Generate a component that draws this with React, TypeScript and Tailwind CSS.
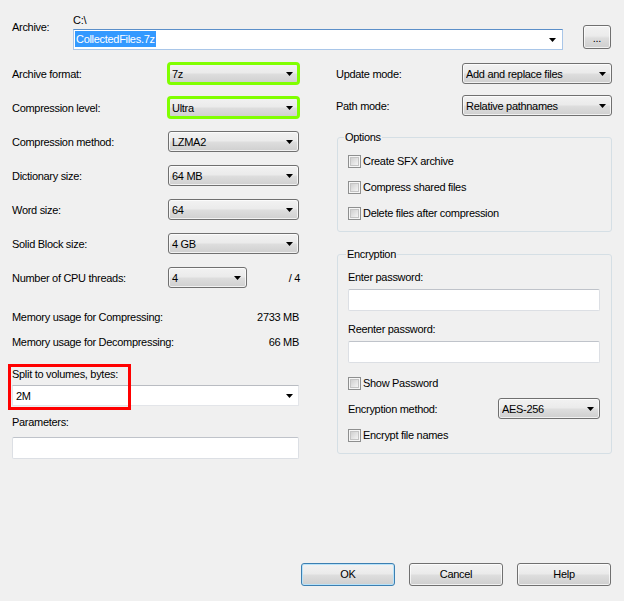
import clsx from 'clsx';

// Small black drop-down triangle used by every combo box
function Arrow() {
  return (
    <svg width="7" height="4" viewBox="0 0 7 4" className="shrink-0">
      <path d="M0 0h7L3.5 4z" fill="#000" />
    </svg>
  );
}

// Read-only combo box (grey button face)
function Combo({ value, width, green }: { value: string; width: string; green?: boolean }) {
  return (
    <div
      className={clsx(
        'flex h-[21px] shrink-0 items-center rounded-[3px] border border-[#707070] bg-[linear-gradient(#f2f2f2,#ebebeb_45%,#dddddd_55%,#cfcfcf)] pl-[3px] pr-[5px] shadow-[inset_0_0_0_1px_rgba(255,255,255,0.7)]',
        width,
        green && 'outline-[3px] outline-offset-[-2px] outline-[#80ff00] outline-solid'
      )}
    >
      <span className="flex-1 truncate leading-[14px]">{value}</span>
      <Arrow />
    </div>
  );
}

function TextBox({ width, children }: { width: string; children?: React.ReactNode }) {
  return (
    <div
      className={clsx(
        'flex h-[22px] items-center rounded-[2px] border border-[#dcdfe4] border-t-[#bfc3ca] bg-white pl-[3px] pr-[5px]',
        width
      )}
    >
      {children}
    </div>
  );
}

function CheckBox({ label }: { label: string }) {
  return (
    <div className="flex h-[14px] items-center gap-[2px]">
      <div className="h-[13px] w-[13px] shrink-0 border border-[#8e8f8f] bg-[#f6f6f6] p-[1px]">
        <div className="h-full w-full border border-[#c4c4c4] bg-[linear-gradient(135deg,#d0d0d0,#f4f4f4)]" />
      </div>
      <span className="leading-[14px]">{label}</span>
    </div>
  );
}

function Button({ label, primary }: { label: string; primary?: boolean }) {
  return (
    <div
      className={clsx(
        'flex h-[23px] w-[94px] items-center justify-center rounded-[3px] border bg-[linear-gradient(#f2f2f2,#ebebeb_45%,#dddddd_55%,#cfcfcf)]',
        primary
          ? 'border-[#3c7fb1] shadow-[inset_0_0_0_1px_#b8e2f9]'
          : 'border-[#707070] shadow-[inset_0_0_0_1px_rgba(255,255,255,0.7)]'
      )}
    >
      {label}
    </div>
  );
}

const leftRows = [
  { label: 'Archive format:', value: '7z', green: true },
  { label: 'Compression level:', value: 'Ultra', green: true },
  { label: 'Compression method:', value: 'LZMA2' },
  { label: 'Dictionary size:', value: '64 MB' },
  { label: 'Word size:', value: '64' },
  { label: 'Solid Block size:', value: '4 GB' },
];

export default function App() {
  return (
    <div className="flex h-[601px] w-[624px] flex-col bg-[#f0f0f0] font-['Liberation_Sans',Arial,sans-serif] text-[11px] tracking-[-0.3px] text-black">
      {/* Archive path */}
      <div className="flex pl-[12px] pr-[13px] pt-[12px]">
        <div className="w-[61px] shrink-0 pt-[8px] leading-[14px]">Archive:</div>
        <div className="flex flex-1 flex-col">
          <div className="pt-[1px] leading-[14px]">C:\</div>
          <div className="flex items-start">
            <div className="mt-[2px] flex h-[21px] flex-1 items-center border border-[#a9c6e8] border-t-[#5b8fc9] bg-white pl-[1px] pr-[6px]">
              <span className="flex-1">
                <span className="inline-block bg-[#3399ff] px-[1px] leading-[16px] text-white">CollectedFiles.7z</span>
              </span>
              <Arrow />
            </div>
            <div className="ml-[20px] mt-[-2px] flex h-[24px] w-[28px] items-center justify-center rounded-[3px] border border-[#707070] bg-[linear-gradient(#f2f2f2,#ebebeb_45%,#dddddd_55%,#cfcfcf)] pt-[3px] shadow-[inset_0_0_0_1px_rgba(255,255,255,0.7)]">
              ...
            </div>
          </div>
        </div>
      </div>

      <div className="mt-[13px] flex gap-[36px] pl-[12px]">
        {/* Left column: compression settings */}
        <div className="flex w-[288px] flex-col">
          <div className="flex flex-col gap-[13px]">
            {leftRows.map((r) => (
              <div key={r.label} className="flex h-[21px] items-center">
                <span className="w-[156px] shrink-0 leading-[14px]">{r.label}</span>
                <Combo value={r.value} width="w-[131px]" green={r.green} />
              </div>
            ))}
            <div className="flex h-[21px] items-center">
              <span className="w-[156px] shrink-0 leading-[14px]">Number of CPU threads:</span>
              <Combo value="4" width="w-[79px]" />
              <span className="ml-auto leading-[14px]">/ 4</span>
            </div>
          </div>

          <div className="mt-[22px] flex justify-between pr-[1px] leading-[14px]">
            <span>Memory usage for Compressing:</span>
            <span>2733 MB</span>
          </div>
          <div className="mt-[11px] flex justify-between pr-[1px] leading-[14px]">
            <span>Memory usage for Decompressing:</span>
            <span>66 MB</span>
          </div>

          <div className="relative mt-[18px] flex flex-col">
            <span className="leading-[14px]">Split to volumes, bytes:</span>
            <div className="mt-[4px] flex h-[21px] w-[287px] items-center border border-[#e3e5e9] border-t-[#b9bcc2] bg-white pl-[3px] pr-[5px]">
              <span className="flex-1 leading-[14px]">2M</span>
              <Arrow />
            </div>
            <div className="absolute left-[-4px] top-[-3px] h-[46px] w-[123px] border-[3px] border-[#ff0000]" />
          </div>

          <span className="mt-[9px] leading-[14px]">Parameters:</span>
          <div className="mt-[8px]">
            <TextBox width="w-[287px]" />
          </div>
        </div>

        {/* Right column: update mode, options, encryption */}
        <div className="flex w-[276px] flex-col">
          <div className="flex h-[21px] items-center">
            <span className="w-[126px] shrink-0 leading-[14px]">Update mode:</span>
            <Combo value="Add and replace files" width="w-[150px]" />
          </div>
          <div className="mt-[11px] flex h-[21px] items-center">
            <span className="w-[126px] shrink-0 leading-[14px]">Path mode:</span>
            <Combo value="Relative pathnames" width="w-[150px]" />
          </div>

          <fieldset className="ml-[1px] mt-[14px] w-[275px] rounded-[3px] border border-[#d5dfe5]">
            <legend className="ml-[6px] px-[1px] leading-[14px]">Options</legend>
            <div className="flex flex-col gap-[12px] pb-[11px] pl-[10px] pt-[10px]">
              <CheckBox label="Create SFX archive" />
              <CheckBox label="Compress shared files" />
              <CheckBox label="Delete files after compression" />
            </div>
          </fieldset>

          <fieldset className="ml-[1px] mt-[15px] w-[275px] rounded-[3px] border border-[#d5dfe5]">
            <legend className="ml-[8px] px-[1px] leading-[14px]">Encryption</legend>
            <div className="flex flex-col pb-[11px] pl-[10px] pt-[9px]">
              <span className="leading-[14px]">Enter password:</span>
              <div className="mt-[5px]">
                <TextBox width="w-[252px]" />
              </div>
              <span className="mt-[11px] leading-[14px]">Reenter password:</span>
              <div className="mt-[5px]">
                <TextBox width="w-[252px]" />
              </div>
              <div className="mt-[13px]">
                <CheckBox label="Show Password" />
              </div>
              <div className="mt-[8px] flex h-[21px] items-center">
                <span className="w-[150px] shrink-0 leading-[14px]">Encryption method:</span>
                <Combo value="AES-256" width="w-[102px]" />
              </div>
              <div className="mt-[9px]">
                <CheckBox label="Encrypt file names" />
              </div>
            </div>
          </fieldset>
        </div>
      </div>

      {/* Dialog buttons */}
      <div className="mt-auto flex justify-end gap-[14px] pb-[15px] pr-[13px]">
        <Button label="OK" primary />
        <Button label="Cancel" />
        <Button label="Help" />
      </div>
    </div>
  );
}
